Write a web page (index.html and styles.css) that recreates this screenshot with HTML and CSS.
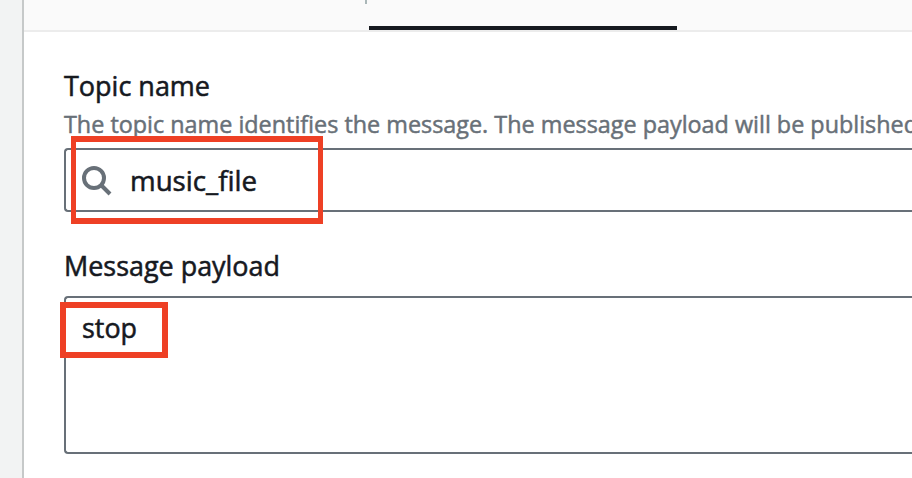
FILE: index.html
```html
<!DOCTYPE html>
<html lang="en">
<head>
<meta charset="utf-8">
<title>Publish to a topic</title>
<link rel="stylesheet" href="styles.css">
</head>
<body>
<main class="panel">
  <div class="tabs"><span class="divider"></span><span class="active-tab"></span></div>
  <form class="form">
    <section class="field topic">
      <label><svg class="t" width="146" height="34"><text x="0" y="26" textLength="146" lengthAdjust="spacingAndGlyphs">Topic name</text></svg></label>
      <p class="hint"><svg class="t" width="848" height="30"><text x="0" y="22" textLength="854" lengthAdjust="spacingAndGlyphs">The topic name identifies the message. The message payload will be published</text></svg></p>
      <div class="input">
        <svg class="search" width="32" height="32" viewBox="0 0 32 32"><circle cx="13" cy="13" r="10"/><path d="M20 20L29 29"/></svg>
        <svg class="t value" width="130" height="34"><text x="0" y="26" textLength="127" lengthAdjust="spacingAndGlyphs">music_file</text></svg>
        <span class="mark mark-topic"></span>
      </div>
    </section>
    <section class="field payload">
      <label><svg class="t" width="220" height="34"><text x="0" y="26" textLength="216" lengthAdjust="spacingAndGlyphs">Message payload</text></svg></label>
      <div class="textarea">
        <svg class="t" width="60" height="34"><text x="0" y="26" textLength="55" lengthAdjust="spacingAndGlyphs">stop</text></svg>
        <span class="mark mark-payload"></span>
      </div>
    </section>
  </form>
</main>
</body>
</html>
```
FILE: styles.css
```css
* { box-sizing: border-box; }
body { margin: 0; height: 478px; overflow: hidden; background: #f2f3f3; padding-left: 22px; font-family: "Open Sans", "Noto Sans", sans-serif; }
.panel { height: 478px; border-left: 2px solid #c6c9c9; background: #fff; overflow: hidden; }
.tabs { display: flex; align-items: flex-start; height: 32px; background: #fafafa; border-bottom: 2px solid #ececec; }
.divider { width: 2px; height: 4px; margin-left: 341px; background: #aab7b8; }
.active-tab { width: 308px; height: 4px; margin: 26px 0 0 2px; background: #16191f; }
.form { padding: 38px 0 0 40px; }
label, .t { display: block; }
.t { overflow: visible; font-size: 27.5px; font-weight: 500; fill: #16191f; stroke: #16191f; stroke-width: .55; }
.hint { margin: 7px 0 0; height: 37px; }
.hint .t { font-size: 24px; fill: #687078; stroke: #687078; stroke-width: .5; }
.input { position: relative; display: flex; height: 64px; padding: 15px 0 0 15px; border: 2px solid #687078; border-right: 0; border-radius: 4px 0 0 4px; }
.search { flex: none; fill: none; stroke: #687078; stroke-width: 4; }
.value { margin-left: 17px; }
.payload { margin-top: 38px; }
.textarea { position: relative; height: 158px; margin-top: 12px; padding: 14px 0 0 16px; border: 2px solid #687078; border-right: 0; border-radius: 4px 0 0 4px; }
.mark { position: absolute; border: 5.5px solid #ee4025; }
.mark-topic { left: 5px; top: -14px; width: 251.5px; height: 88px; border-width: 6px 5.5px; }
.mark-payload { left: -6px; top: 4px; width: 107.5px; height: 56px; border-width: 6px; }
```
